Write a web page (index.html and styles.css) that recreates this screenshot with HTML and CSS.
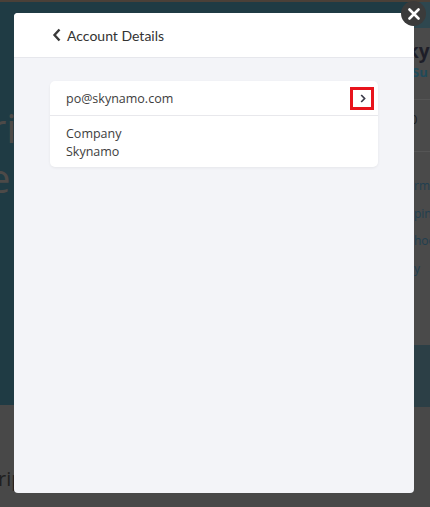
FILE: index.html
```html
<!DOCTYPE html>
<html>
<head>
<meta charset="utf-8">
<link rel="stylesheet" href="styles.css">
</head>
<body>
<div class="app">
  <div class="side-left">
    <div class="hero">
      <span class="hero-word w1">ri</span>
      <span class="hero-word w2">e</span>
    </div>
    <div class="left-bottom">
      <span class="rip">rip</span>
    </div>
  </div>
  <div class="mid">
    <div class="mid-top"></div>
    <div class="mid-bottom"></div>
  </div>
  <div class="side-right">
    <div class="r-top"></div>
    <div class="r-head">
      <span class="r-title">ky</span>
      <span class="r-sub">Su</span>
    </div>
    <div class="r-row">0</div>
    <div class="r-links">
      <span>rma</span>
      <span>pin</span>
      <span>hoo</span>
      <span>y</span>
    </div>
    <div class="r-band"></div>
    <div class="r-rest"></div>
  </div>
</div>

<div class="modal">
  <div class="modal-head">
    <svg class="back" width="10" height="14" viewBox="0 0 10 14"><path d="M7.5 1.5 L2.5 7 L7.5 12.5" fill="none" stroke="#3a3a3a" stroke-width="2.4"/></svg>
    <span class="title">Account Details</span>
  </div>
  <div class="modal-body">
    <div class="card">
      <div class="row email-row">
        <span class="email">po@skynamo.com</span>
        <span class="go">
          <svg width="6" height="9" viewBox="0 0 6 9"><path d="M1.2 1 L4.6 4.5 L1.2 8" fill="none" stroke="#3b3b4a" stroke-width="1.7"/></svg>
        </span>
      </div>
      <div class="row company-row">
        <span>Company</span>
        <span>Skynamo</span>
      </div>
    </div>
  </div>
</div>
<div class="close">
  <svg width="12" height="12" viewBox="0 0 12 12"><path d="M1.5 1.5 L10.5 10.5 M10.5 1.5 L1.5 10.5" stroke="#ffffff" stroke-width="2.6" stroke-linecap="round"/></svg>
</div>
</body>
</html>
```
FILE: styles.css
```css
* { box-sizing: border-box; }
html, body {
  margin: 0;
  padding: 0;
  width: 430px;
  height: 507px;
  overflow: hidden;
}
body {
  position: relative;
  font-family: "Open Sans", "Noto Sans", sans-serif;
  background: #474747;
}
.app {
  display: flex;
  height: 507px;
  border-top: 2px solid #4a4038;
}
.side-left {
  width: 14px;
  display: flex;
  flex-direction: column;
  overflow: hidden;
}
.hero {
  height: 403px;
  background: #1f3b44;
  padding-top: 104px;
  display: flex;
  flex-direction: column;
  gap: 6px;
}
.hero-word {
  font-size: 40px;
  line-height: 44px;
  color: #4d4a48;
  font-family: "Open Sans", sans-serif;
  white-space: nowrap;
  margin-left: -10px;
}
.hero-word.w2 { margin-left: -12px; }
.left-bottom {
  flex: 1;
  background: #484848;
  padding-top: 62px;
}
.rip {
  font-size: 20px;
  color: #1f1f1f;
  white-space: nowrap;
  margin-left: -2px;
  display: block;
  line-height: 24px;
}
.mid {
  flex: 1;
  display: flex;
  flex-direction: column;
}
.mid-top { height: 403px; background: #1f3b44; }
.mid-bottom { flex: 1; background: #484848; }
.side-right {
  width: 16px;
  display: flex;
  flex-direction: column;
  overflow: hidden;
  background: #4a4a4a;
}
.r-top { height: 26px; background: #2e474f; }
.r-head {
  height: 72px;
  display: flex;
  flex-direction: column;
  padding-top: 12px;
  border-bottom: 1px solid #555;
}
.r-title {
  font-size: 19px;
  font-weight: 700;
  color: #1e1e28;
  line-height: 22px;
  margin-left: -7px;
  white-space: nowrap;
}
.r-sub {
  font-size: 13px;
  font-weight: 700;
  color: #1f4a5a;
  line-height: 20px;
  margin-left: -2px;
  white-space: nowrap;
}
.r-row {
  height: 52px;
  font-size: 13px;
  color: #1e1e1e;
  padding-top: 10px;
  margin-left: -4px;
  border-bottom: 1px solid #555;
}
.r-links {
  display: flex;
  flex-direction: column;
  padding-top: 20px;
  height: 193px;
}
.r-links span {
  font-size: 12px;
  line-height: 27.5px;
  color: #1f3f50;
  white-space: nowrap;
}
.r-band { height: 62px; background: #2c3f46; }
.r-rest { flex: 1; background: #484848; }

.modal {
  position: absolute;
  left: 14px;
  top: 13px;
  width: 400px;
  height: 480px;
  background: #f3f4f8;
  border-radius: 4px;
  overflow: hidden;
  display: flex;
  flex-direction: column;
}
.modal-head {
  height: 45px;
  background: #ffffff;
  border-bottom: 1px solid #e6e7ec;
  display: flex;
  align-items: center;
  padding-left: 38px;
  gap: 5px;
}
.back { display: block; }
.title {
  font-size: 14px;
  color: #333;
  font-family: "Lato", "Open Sans", sans-serif;
}
.modal-body {
  padding: 23px 36px 0 36px;
}
.card {
  background: #ffffff;
  border-radius: 5px;
  box-shadow: 0 1px 3px rgba(0,0,0,0.06);
  width: 328px;
}
.row {
  padding: 0 16px;
  font-size: 12.5px;
  color: #3d3d3d;
}
.email-row {
  height: 35px;
  border-bottom: 1px solid #e8e8ec;
  display: flex;
  align-items: center;
  justify-content: space-between;
  padding-right: 4px;
}
.go {
  width: 24px;
  height: 23px;
  border: 3px solid #e8141c;
  display: flex;
  align-items: center;
  justify-content: center;
}
.go svg { display: block; margin-left: 2px; }
.company-row {
  display: flex;
  flex-direction: column;
  padding-top: 9px;
  padding-bottom: 6px;
  line-height: 18px;
}
.close {
  position: absolute;
  left: 401px;
  top: 1px;
  width: 25px;
  height: 25px;
  border-radius: 50%;
  background: #3b3b3b;
  display: flex;
  align-items: center;
  justify-content: center;
}
```
